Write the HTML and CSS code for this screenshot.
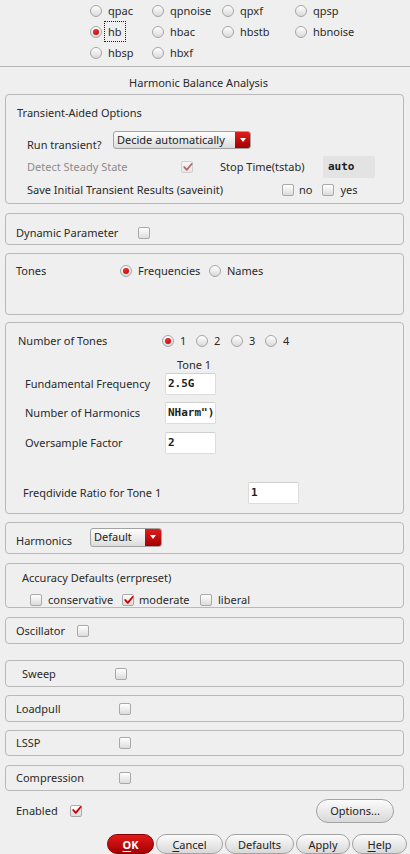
FILE: index.html
```html
<!DOCTYPE html>
<html>
<head>
<meta charset="utf-8">
<link rel="stylesheet" href="styles.css">
</head>
<body>
<div class="types">
  <div class="opt"><span class="radio"></span><span class="lbl">qpac</span></div>
  <div class="opt"><span class="radio"></span><span class="lbl">qpnoise</span></div>
  <div class="opt"><span class="radio"></span><span class="lbl">qpxf</span></div>
  <div class="opt"><span class="radio"></span><span class="lbl">qpsp</span></div>
  <div class="opt"><span class="radio on"></span><span class="lbl focus">hb</span></div>
  <div class="opt"><span class="radio"></span><span class="lbl">hbac</span></div>
  <div class="opt"><span class="radio"></span><span class="lbl">hbstb</span></div>
  <div class="opt"><span class="radio"></span><span class="lbl">hbnoise</span></div>
  <div class="opt"><span class="radio"></span><span class="lbl">hbsp</span></div>
  <div class="opt"><span class="radio"></span><span class="lbl">hbxf</span></div>
</div>
<div class="heading">Harmonic Balance Analysis</div>

<div class="panels">
  <section class="panel trans">
    <div class="ptitle">Transient-Aided Options</div>
    <div class="row run">
      <span class="lab w-run">Run transient?</span>
      <div class="combo wide"><span class="ctext">Decide automatically</span><span class="carrow"></span></div>
    </div>
    <div class="row detect">
      <span class="lab dis w-detect">Detect Steady State</span>
      <span class="cb dis"><svg viewBox="0 0 12 12"><path d="M2.5 5.5 L5.2 8.6 L10.5 2.2"/></svg></span>
      <span class="lab w-stop">Stop Time(tstab)</span>
      <span class="field grey">auto</span>
    </div>
    <div class="row save">
      <span class="lab w-save">Save Initial Transient Results (saveinit)</span>
      <span class="cb"></span><span class="cbl no">no</span>
      <span class="cb"></span><span class="cbl yes">yes</span>
    </div>
  </section>

  <section class="panel single dyn">
    <span class="lab w-dyn">Dynamic Parameter</span><span class="cb"></span>
  </section>

  <section class="panel tones">
    <div class="row trow">
      <span class="lab w-tones">Tones</span>
      <span class="ro w-freq"><span class="radio on"></span><span class="rt">Frequencies</span></span>
      <span class="ro"><span class="radio"></span><span class="rt">Names</span></span>
    </div>
  </section>

  <section class="panel ntones">
    <div class="row nrow">
      <span class="lab w-ntones">Number of Tones</span>
      <span class="ro w-n1"><span class="radio on"></span><span class="rt">1</span></span>
      <span class="ro w-n2"><span class="radio"></span><span class="rt">2</span></span>
      <span class="ro w-n1"><span class="radio"></span><span class="rt">3</span></span>
      <span class="ro"><span class="radio"></span><span class="rt">4</span></span>
    </div>
    <div class="tonehdr">Tone 1</div>
    <div class="row frow f1"><span class="lab w-flab">Fundamental Frequency</span><span class="field">2.5G</span></div>
    <div class="row frow f2"><span class="lab w-flab">Number of Harmonics</span><span class="field">NHarm")</span></div>
    <div class="row frow f3"><span class="lab w-flab">Oversample Factor</span><span class="field">2</span></div>
    <div class="row frow f4"><span class="lab w-fdiv">Freqdivide Ratio for Tone 1</span><span class="field">1</span></div>
  </section>

  <section class="panel single harm">
    <span class="lab w-harm">Harmonics</span>
    <div class="combo small"><span class="ctext">Default</span><span class="carrow"></span></div>
  </section>

  <section class="panel acc">
    <div class="ptitle acctitle">Accuracy Defaults (errpreset)</div>
    <div class="row accrow">
      <span class="co w-cons"><span class="cb"></span><span class="ct">conservative</span></span>
      <span class="co w-mod"><span class="cb on"><svg viewBox="0 0 12 12"><path d="M2.5 5.5 L5.2 8.6 L10.5 2.2"/></svg></span><span class="ct mod">moderate</span></span>
      <span class="co"><span class="cb"></span><span class="ct">liberal</span></span>
    </div>
  </section>

  <section class="panel single osc">
    <span class="lab w-osc">Oscillator</span><span class="cb"></span>
  </section>

  <section class="panel single sweep">
    <span class="lab w-sweep">Sweep</span><span class="cb"></span>
  </section>

  <section class="panel single lp">
    <span class="lab w-lp">Loadpull</span><span class="cb"></span>
  </section>

  <section class="panel single lssp">
    <span class="lab w-lp">LSSP</span><span class="cb"></span>
  </section>

  <section class="panel single comp">
    <span class="lab w-lp">Compression</span><span class="cb"></span>
  </section>
</div>

<div class="footer">
  <span class="lab w-en">Enabled</span>
  <span class="cb on"><svg viewBox="0 0 12 12"><path d="M2.5 5.5 L5.2 8.6 L10.5 2.2"/></svg></span>
  <span class="spacer"></span>
  <button class="btn opts">Options...</button>
</div>

<div class="actions">
  <button class="btn ok"><u>O</u>K</button>
  <button class="btn cancel"><u>C</u>ancel</button>
  <button class="btn defaults">Defaults</button>
  <button class="btn apply">Apply</button>
  <button class="btn help"><u>H</u>elp</button>
</div>
</body>
</html>
```

FILE: styles.css
```css
* { box-sizing: border-box; }

html, body {
  margin: 0;
  padding: 0;
}

body {
  width: 410px;
  height: 854px;
  overflow: hidden;
  background: #efefef;
  font-family: "Noto Sans", "Open Sans", sans-serif;
  font-size: 11px;
  line-height: 14px;
  color: #2a2a2a;
}

/* top analysis type radios */
.types {
  display: grid;
  grid-template-columns: 62px 70px 73px 100px;
  grid-auto-rows: 21px;
  align-content: start;
  padding-left: 90px;
  height: 67px;
  border-bottom: 1px solid #b6b6b6;
}

.opt {
  display: flex;
  align-items: center;
}

.opt .lbl {
  height: 21px;
  margin-left: 2px;
  padding: 0 3px;
  border: 1px dotted transparent;
  display: flex;
  align-items: center;
}

.opt .lbl.focus {
  border-color: #1a1a1a;
}

.heading {
  height: 27px;
  padding-top: 9px;
  padding-right: 13px;
  text-align: center;
}

/* radio + checkbox widgets */
.radio {
  width: 12px;
  height: 12px;
  flex-shrink: 0;
  border-radius: 50%;
  border: 1px solid #a6a6a6;
  background: linear-gradient(#ffffff, #d9d9d9);
  display: flex;
  align-items: center;
  justify-content: center;
}

.radio.on::after {
  content: "";
  width: 6px;
  height: 6px;
  border-radius: 50%;
  background: radial-gradient(circle at 40% 35%, #f03030, #b00000);
}

.cb {
  width: 12px;
  height: 12px;
  flex-shrink: 0;
  border: 1px solid #a9a9a9;
  border-radius: 2px;
  background: linear-gradient(#ffffff, #dcdcdc);
  display: flex;
  align-items: center;
  justify-content: center;
}

.cb svg {
  width: 11px;
  height: 11px;
  overflow: visible;
}

.cb svg path {
  fill: none;
  stroke: #cc0000;
  stroke-width: 2;
  stroke-linecap: round;
  stroke-linejoin: round;
}

.cb.dis {
  border-color: #cfcfcf;
  background: linear-gradient(#f6f6f6, #e8e8e8);
}

.cb.dis svg path {
  stroke: #b86a6a;
}

/* panels */
.panels {
  padding: 0 6px 0 5px;
}

.panel {
  border: 1px solid #b9b9b9;
  border-radius: 4px;
}

.panel.single {
  display: flex;
  align-items: center;
}

.row {
  display: flex;
  align-items: center;
}

.lab {
  flex-shrink: 0;
  white-space: nowrap;
}

.lab.dis {
  color: #8c8c8c;
}

.ptitle {
  display: flex;
  align-items: center;
}

/* transient panel */
.trans { height: 110px; }
.trans .ptitle { height: 36px; padding-left: 11px; }

.run { height: 18px; align-items: flex-start; }
.w-run { width: 107px; padding-left: 21px; margin-top: 7px; }

.detect { height: 22px; margin-top: 7px; }
.w-detect { width: 175px; padding-left: 21px; }
.w-stop { width: 103px; margin-left: 27px; }

.save { height: 20px; margin-top: 2px; }
.w-save { width: 276px; padding-left: 21px; }
.cbl.no { margin: 0 10px 0 5px; }
.cbl.yes { margin-left: 6px; }

/* combo box */
.combo {
  display: flex;
  border: 1px solid #a2a2a2;
  border-radius: 3px;
  background: linear-gradient(#fefefe, #dcdcdc);
  overflow: hidden;
  flex-shrink: 0;
}

.combo.wide { width: 138px; height: 18px; }
.combo.small { width: 72px; height: 19px; margin-bottom: 8px; }

.ctext {
  flex: 1;
  padding-left: 3px;
  line-height: 16px;
  color: #222;
}

.carrow {
  width: 15px;
  background: linear-gradient(#e21c1c, #a30000);
  display: flex;
  align-items: center;
  justify-content: center;
}

.combo.small .carrow { width: 16px; }

.carrow::after {
  content: "";
  border-left: 3.5px solid transparent;
  border-right: 3.5px solid transparent;
  border-top: 4px solid #ffffff;
}

/* text fields */
.field {
  width: 51px;
  height: 22px;
  flex-shrink: 0;
  background: #ffffff;
  border: 1px solid #dcdcdc;
  border-top-color: #cfcfcf;
  border-radius: 2px;
  padding-left: 2px;
  display: flex;
  align-items: center;
  font-family: "DejaVu Sans Mono", "Liberation Mono", monospace;
  font-weight: bold;
  font-size: 11px;
  color: #1e1e1e;
  white-space: nowrap;
  overflow: hidden;
}

.field.grey {
  width: 52px;
  background: #e3e3e3;
  border-color: #e3e3e3;
  padding-left: 4px;
}

/* dynamic parameter */
.dyn { height: 32px; margin-top: 9px; padding-top: 7px; }
.w-dyn { width: 132px; padding-left: 10px; }

/* tones */
.tones { height: 62px; margin-top: 8px; }
.trow { height: 14px; margin-top: 10px; }
.w-tones { width: 114px; padding-left: 10px; }

.ro { display: flex; align-items: center; flex-shrink: 0; }
.ro .rt { margin-left: 6px; }
.w-freq { width: 89px; }

/* number of tones */
.ntones { height: 192px; margin-top: 7px; }
.nrow { height: 35px; }
.w-ntones { width: 156px; padding-left: 12px; }
.w-n1 { width: 34px; }
.w-n2 { width: 35px; }

.tonehdr { height: 14px; padding-left: 171px; }

.frow { height: 22px; }
.f1 { margin-top: 1px; }
.f2 { margin-top: 7px; }
.f3 { margin-top: 8px; }
.f4 { margin-top: 28px; }
.w-flab { width: 159px; padding-left: 19px; }
.w-fdiv { width: 242px; padding-left: 17px; }

/* harmonics */
.harm { height: 32px; margin-top: 8px; padding-top: 6px; }
.w-harm { width: 84px; padding-left: 10px; }

/* accuracy */
.acc { height: 45px; margin-top: 9px; }
.acctitle { height: 28px; padding-left: 16px; }
.accrow { height: 16px; padding-left: 24px; }
.co { display: flex; align-items: center; flex-shrink: 0; }
.co .ct { margin-left: 6px; }
.co .ct.mod { margin-left: 5px; }
.w-cons { width: 92px; }
.w-mod { width: 78px; }

/* single-row toggles */
.osc { height: 27px; margin-top: 9px; padding-top: 1px; }
.w-osc { width: 71px; padding-left: 10px; }

.sweep { height: 27px; margin-top: 16px; }
.w-sweep { width: 109px; padding-left: 16px; }

.lp { height: 27px; margin-top: 8px; }
.lssp { height: 26px; margin-top: 8px; }
.comp { height: 26px; margin-top: 9px; }
.w-lp { width: 113px; padding-left: 10px; }

/* footer */
.footer {
  display: flex;
  align-items: center;
  height: 25px;
  margin-top: 7px;
  padding: 0 16px;
}

.w-en { width: 54px; }
.spacer { flex: 1; }

.btn {
  font-family: "Noto Sans", "Open Sans", sans-serif;
  font-size: 11px;
  color: #222;
  border: 1px solid #a3a3a3;
  border-radius: 10px;
  background: linear-gradient(#fcfcfc, #d8d8d8);
  height: 20px;
  padding: 0;
  display: flex;
  align-items: center;
  justify-content: center;
  flex-shrink: 0;
}

.btn u { text-decoration-thickness: 1px; text-underline-offset: 2px; }

.btn.opts {
  width: 78px;
  height: 24px;
  border-radius: 12px;
}

.actions {
  display: flex;
  justify-content: flex-end;
  gap: 2px;
  height: 20px;
  margin-top: 11px;
  padding-right: 3px;
}

.btn.ok {
  width: 47px;
  color: #ffffff;
  font-weight: bold;
  background: linear-gradient(#e21a1a, #a40000);
  border-color: #8a0000;
}

.btn.cancel { width: 67px; }
.btn.defaults { width: 69px; }
.btn.apply { width: 54px; }
.btn.help { width: 55px; }
```
